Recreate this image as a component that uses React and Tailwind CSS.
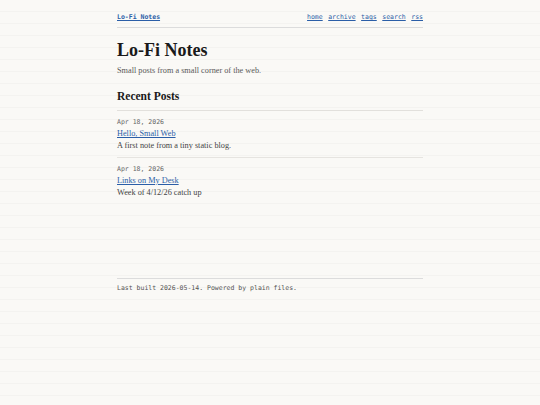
import React from 'react';

const posts = [
  { date: 'Apr 18, 2026', title: 'Hello, Small Web', blurb: 'A first note from a tiny static blog.' },
  { date: 'Apr 18, 2026', title: 'Links on My Desk', blurb: 'Week of 4/12/26 catch up' },
];

const navLinks = ['home', 'archive', 'tags', 'search', 'rss'];

const mono = 'font-["DejaVu_Sans_Mono",monospace]';
const serif = 'font-["Liberation_Serif",serif]';

export default function App() {
  return (
    <div className="min-h-[405px] bg-[#faf9f6] bg-[repeating-linear-gradient(to_bottom,transparent_0,transparent_11px,rgba(0,0,0,0.022)_11px,rgba(0,0,0,0.022)_12px)] text-[#222]">
      <div className="w-[306px] mx-auto">
        {/* Header */}
        <header className="flex items-center justify-between pt-[11px] pb-[4px] border-b border-[#dcdcdc]">
          <a href="#" className={`${mono} text-[6.5px] leading-[12px] font-bold text-[#2b5ea7] underline`}>
            Lo-Fi Notes
          </a>
          <nav className="flex gap-[5.5px]">
            {navLinks.map((l) => (
              <a key={l} href="#" className={`${mono} text-[6.5px] leading-[12px] text-[#2b5ea7] underline`}>
                {l}
              </a>
            ))}
          </nav>
        </header>

        <main className={serif}>
          <h1 className="mt-[10px] text-[18px] leading-[24px] font-bold text-[#1a1a1a]">Lo-Fi Notes</h1>
          <p className="mt-[2.5px] text-[8.25px] leading-[12px] text-[#5a5a5a]">Small posts from a small corner of the web.</p>

          <h2 className="mt-[11px] pb-[6px] text-[11.5px] leading-[16px] font-bold text-[#1a1a1a] border-b border-[#e2e0dc]">
            Recent Posts
          </h2>

          <ul>
            {posts.map((p, i) => (
              <li
                key={i}
                className={`pt-[6.5px] pb-[4.5px] ${i < posts.length - 1 ? 'border-b border-[#e6e4e0]' : ''}`}
              >
                <div className={`${mono} text-[6.5px] leading-[11px] text-[#666]`}>{p.date}</div>
                <a href="#" className="block text-[8.25px] leading-[12px] text-[#2b5ea7] underline">
                  {p.title}
                </a>
                <p className="text-[8.25px] leading-[12px] text-[#444]">{p.blurb}</p>
              </li>
            ))}
          </ul>
        </main>

        <footer className="mt-[74px] pt-[4.5px] border-t border-[#dcdcdc]">
          <p className={`${mono} text-[6.5px] leading-[10px] text-[#555]`}>
            Last built 2026-05-14. Powered by plain files.
          </p>
        </footer>
      </div>
    </div>
  );
}
